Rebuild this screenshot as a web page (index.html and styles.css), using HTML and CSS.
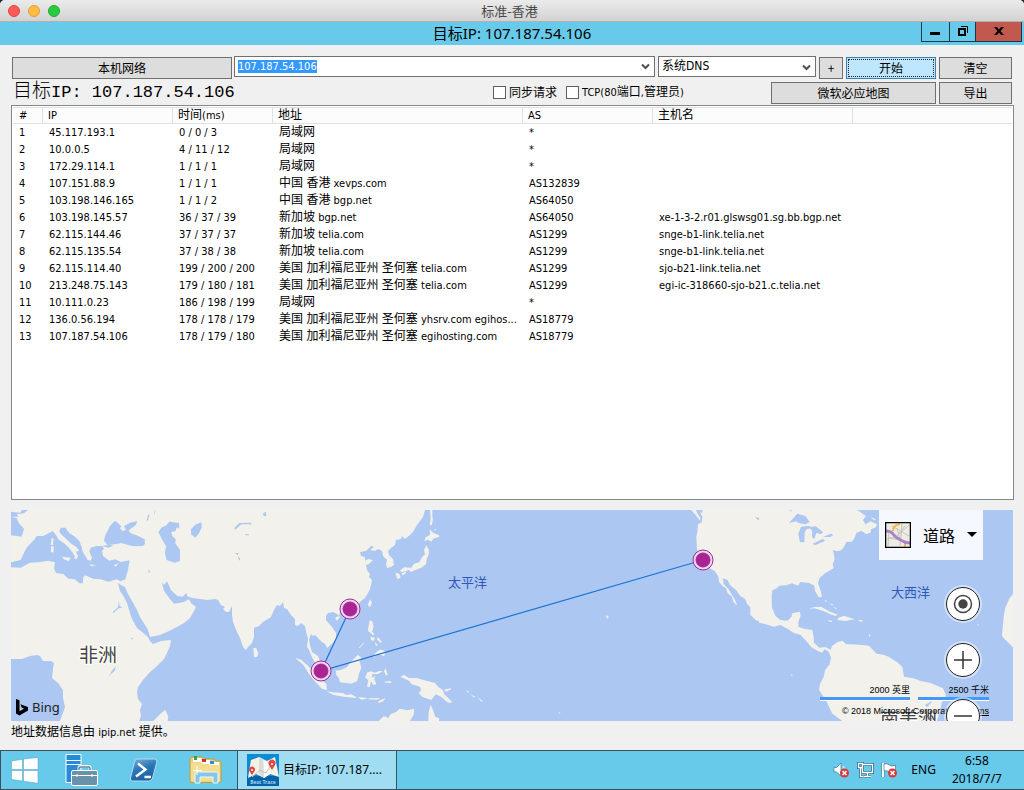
FILE: index.html
```html
<!DOCTYPE html>
<html lang="zh-CN">
<head>
<meta charset="utf-8">
<title>标准-香港</title>
<link rel="stylesheet" href="styles.css">
</head>
<body>
<div class="screen">
  <header class="mac-bar">
    <span class="light red"></span><span class="light amber"></span><span class="light green"></span>
    <span class="mac-title">标准-香港</span>
  </header>

  <div class="win-bar">
    <h1 class="win-title">目标IP: 107.187.54.106</h1>
    <div class="win-controls">
      <button class="wc" aria-label="最小化"><svg width="27" height="19" viewBox="0 0 27 19"><path d="M8 10h10v3H8z"/></svg></button>
      <button class="wc" aria-label="还原"><svg width="25" height="19" viewBox="0 0 25 19"><path d="M9 7h6v6H9z" fill="none" stroke="#000" stroke-width="2"/><path d="M11 4.500h6.500V11" fill="none" stroke="#000"/></svg></button>
      <button class="wc close" aria-label="关闭"><svg width="45" height="19" viewBox="0 0 45 19"><path d="M18 5h3l2 2.500L25 5h3l-3.500 4L28 13h-3l-2-2.500L21 13h-3l3.500-4z"/></svg></button>
    </div>
  </div>

  <main class="app">
    <div class="toolbar">
      <button class="btn w-local">本机网络</button>
      <div class="combo">
        <input class="combo-input" aria-label="目标地址" value="107.187.54.106">
        <button class="combo-arrow" aria-label="展开"><svg width="9" height="7" viewBox="0 0 9 7"><path d="M1 1.500l3.500 3.500L8 1.500" fill="none" stroke="#505050" stroke-width="2"/></svg></button>
      </div>
      <div class="dns">
        <select class="dns-select" aria-label="DNS"><option>系统DNS</option></select>
        <svg class="dns-arrow" width="9" height="7" viewBox="0 0 9 7"><path d="M1 1.500l3.500 3.500L8 1.500" fill="none" stroke="#505050" stroke-width="2"/></svg>
      </div>
      <button class="btn w-plus">+</button>
      <button class="btn primary w-start">开始</button>
      <button class="btn w-clear">清空</button>
    </div>
    <div class="subbar">
      <h2 class="target"><span class="target-zh">目标</span>IP: 107.187.54.106</h2>
      <label class="check"><input type="checkbox"><span class="zh">同步请求</span></label>
      <label class="check"><input type="checkbox"><span>TCP(80<span class="zh">端口</span>,<span class="zh">管理员</span>)</span></label>
      <span class="grow"></span>
      <button class="btn w-map">微软必应地图</button>
      <button class="btn w-clear">导出</button>
    </div>

    <div class="list">
      <table class="hops">
        <colgroup><col class="c1"><col class="c2"><col class="c3"><col class="c4"><col class="c5"><col class="c6"><col></colgroup>
        <thead><tr><th>#</th><th>IP</th><th><span class="zh">时间</span>(ms)</th><th><span class="zh">地址</span></th><th>AS</th><th><span class="zh">主机名</span></th><th></th></tr></thead>
        <tbody>
          <tr><td>1</td><td>45.117.193.1</td><td>0 / 0 / 3</td><td><span class="zh">局域网</span></td><td>*</td><td></td><td></td></tr>
          <tr><td>2</td><td>10.0.0.5</td><td>4 / 11 / 12</td><td><span class="zh">局域网</span></td><td>*</td><td></td><td></td></tr>
          <tr><td>3</td><td>172.29.114.1</td><td>1 / 1 / 1</td><td><span class="zh">局域网</span></td><td>*</td><td></td><td></td></tr>
          <tr><td>4</td><td>107.151.88.9</td><td>1 / 1 / 1</td><td><span class="zh">中国 香港</span> xevps.com</td><td>AS132839</td><td></td><td></td></tr>
          <tr><td>5</td><td>103.198.146.165</td><td>1 / 1 / 2</td><td><span class="zh">中国 香港</span> bgp.net</td><td>AS64050</td><td></td><td></td></tr>
          <tr><td>6</td><td>103.198.145.57</td><td>36 / 37 / 39</td><td><span class="zh">新加坡</span> bgp.net</td><td>AS64050</td><td>xe-1-3-2.r01.glswsg01.sg.bb.bgp.net</td><td></td></tr>
          <tr><td>7</td><td>62.115.144.46</td><td>37 / 37 / 37</td><td><span class="zh">新加坡</span> telia.com</td><td>AS1299</td><td>snge-b1-link.telia.net</td><td></td></tr>
          <tr><td>8</td><td>62.115.135.54</td><td>37 / 38 / 38</td><td><span class="zh">新加坡</span> telia.com</td><td>AS1299</td><td>snge-b1-link.telia.net</td><td></td></tr>
          <tr><td>9</td><td>62.115.114.40</td><td>199 / 200 / 200</td><td><span class="zh">美国 加利福尼亚州 圣何塞</span> telia.com</td><td>AS1299</td><td>sjo-b21-link.telia.net</td><td></td></tr>
          <tr><td>10</td><td>213.248.75.143</td><td>179 / 180 / 181</td><td><span class="zh">美国 加利福尼亚州 圣何塞</span> telia.com</td><td>AS1299</td><td>egi-ic-318660-sjo-b21.c.telia.net</td><td></td></tr>
          <tr><td>11</td><td>10.111.0.23</td><td>186 / 198 / 199</td><td><span class="zh">局域网</span></td><td>*</td><td></td><td></td></tr>
          <tr><td>12</td><td>136.0.56.194</td><td>178 / 178 / 179</td><td><span class="zh">美国 加利福尼亚州 圣何塞</span> yhsrv.com egihos...</td><td>AS18779</td><td></td><td></td></tr>
          <tr><td>13</td><td>107.187.54.106</td><td>178 / 179 / 180</td><td><span class="zh">美国 加利福尼亚州 圣何塞</span> egihosting.com</td><td>AS18779</td><td></td><td></td></tr>
        </tbody>
      </table>
    </div>

    <section class="map" aria-label="路由地图">
      <svg class="world" viewBox="11 510 1002 211" preserveAspectRatio="xMidYMid slice">
        <rect x="11" y="510" width="1002" height="211" fill="#abc7f2"/>
        <!-- Eurasia and Africa -->
        <path fill="#f2f1eb" d="M11 510H425L423 517 417 525 413 532 410 535 405 539 402 536 401 539 396 540 395 545 391 548 388 551 389 555 393 559 394 565 391 567 387 568 386 564 387 560 383 556 382 551 378 549 375 551 370 550 374 547 371 546 366 551 360 552 361 556 365 557 365 561 368 559 373 560 369 564 366 565 367 570 370 574 369 577 372 580 371 585 370 589 368 593 365 598 361 601 357 605 351 609 345 611 340 612 339 616 337 614 333 612 328 613 326 616 326 620 332 627 336 633 336 638 333 643 327 648 325 644 322 642 318 638 315 635 313 636 311 634 309 640 310 645 312 652 318 656 320 661 322 669 319 667 314 661 311 655 309 650 307 647 308 638 306 632 305 626 301 623 298 626 295 625 295 619 291 615 287 609 284 608 283 602 280 606 277 605 274 610 271 617 263 622 259 626 254 628 254 637 252 643 249 646 246 650 243 647 240 638 237 632 233 622 232 615 232 606 229 612 226 612 223 609 225 607 221 605 218 600 215 599 207 600 200 599 192 598 187 596 187 593 184 597 189 599 191 603 196 607 194 611 190 618 184 623 177 627 167 632 160 635 150 637 148 630 145 625 140 617 137 610 132 601 127 592 125 587 121 585 118 583 120 591 124 597 127 603 130 613 132 619 137 628 142 632 148 637 150 641 153 644 161 641 171 640 170 646 167 653 164 659 157 666 149 673 143 680 138 687 137 692 138 699 142 704 140 710 141 716 139 721H60L65 707 63 698 63 690 58 683 52 678 53 668 54 663 51 661 43 661 40 656 37 655 30 656 22 659 11 659Z"/>
        <!-- Inland seas and islands of the western half, drawn on a triple grid -->
        <g transform="translate(0 500) scale(.3333)">
          <g fill="#abc7f2">
            <path d="M33 187L62 180 75 152 82 140 104 118 110 108 130 108 158 93 168 105 175 118 195 132 210 148 218 158 225 170 222 175 230 178 234 168 228 155 237 152 230 142 212 130 200 118 185 104 178 95 182 83 196 83 208 100 222 108 238 123 245 140 248 155 263 180 272 182 276 172 268 155 272 143 290 138 307 138 312 146 306 152 309 168 328 182 345 178 362 186 389 181 384 210 376 238 362 244 350 238 325 245 302 238 280 236 255 226 250 232 248 250 238 250 225 238 205 236 190 222 168 219 162 205 165 187 145 182 115 187 90 188 62 203 33 202Z"/>
            <path d="M345 62L330 78 315 108 312 122 322 135 345 133 364 129 385 135 400 139 428 138 435 132 434 118 410 106 392 100 386 91 407 76 412 63 390 68 372 79 378 89 368 93 360 85 364 78Z"/>
            <path d="M306 138L328 134 340 137 325 143Z"/>
            <path d="M508 65L537 69 538 86 530 82 527 93 514 96 517 108 527 118 526 130 540 150 540 183 524 188 500 180 495 160 498 138 486 118 475 96 486 81 498 77Z"/>
            <path d="M573 88L586 74 604 67 605 82 598 98 586 113 573 103Z"/>
            <path d="M703 84L718 69 754 68 752 73 724 73 706 89Z"/>
            <path d="M33 50L50 54 57 70 72 87 65 110 33 106Z"/>
            <path d="M33 35L60 38 66 30H84L72 40 50 43 55 50H33Z"/>
            <path d="M485 247L492 255 501 244 513 270 531 287 548 290 557 281 562 290 570 296 549 307 523 311 510 298 492 272Z"/>
            <path d="M444 207l7 8-4 4zM338 336l16-14 2-18 3 14 8 5-11 2-16 14zM326 530l10-18 12-14-4 14-13 12zM392 416l5-3 3 6zM440 62l4-16 5-3-5 18zM463 36l4-5-5 15zM735 103h12v3h-12z"/>
          </g>
          <g fill="#f2f1eb">
            <path d="M155 114l6 2-2 20-7-2zM154 137l8 3-2 18-8-2zM187 170l25 3-6 11-17-8zM269 193l20 3-16 3zM341 196l15-6-8 10zM760 445l8-2 7 16-3 11-10 2zM460 663L480 643 496 629 505 650 503 663Z"/>
          </g>
          <g fill="#b9b9b0"><path d="M705 158l10 2-1 5zM713 168l7 8-2 6z"/></g>
        </g>
        <g transform="translate(250 500) scale(.3333)">
          <g fill="#f2f1eb">
            <path d="M540 30h7v15l2 15-4 16-6-2 3-18z"/>
            <path d="M539 87L549 98 567 105 568 110 550 116 544 125 534 119 523 124 527 112 540 105z"/>
            <path d="M529 136L537 150 536 165 530 178 528 193 514 203 497 210 483 216 477 210 456 217 449 212 462 202 484 203 492 191 508 187 516 172 525 163 522 150z"/>
            <path d="M436 218l12 3 4 12-10 5zM455 220l14-6-3 8-10 4z"/>
            <path d="M361 298l5 10-6 14-7-8zM359 361l8 3 4 16-5 15 8 7-5 3-15-12 1-10zM256 351l14-2-4 9-8 4zM388 449l10 1 8 6-3 12-14-4-10 2-9 7 4-12z"/>
            <path d="M362 410l13 3-4 10-8-2zM374 425l9 10-5 4zM384 411l12 14-5 3-10-10zM366 398l6 5-5 3zM326 444l16-18-2 6-12 13z"/>
            <path d="M257 512L273 510 291 501 303 485 324 464 334 474 329 484 334 504 328 518 322 543 304 551 270 547 267 535 259 525z"/>
            <path d="M345 533l7-16 12-3 10 4 16-6 8 2-14 8-18 1 1 10 10-5-4 10 6 14-8 4-8-12-4 18-8-2 4-20z"/>
            <path d="M136 474L154 479 175 499 196 521 215 540 229 552 231 570 216 567 191 540 175 519 160 495z"/>
            <path d="M229 573L250 577 280 579 288 585 303 583 318 590 318 594 281 590 250 585zM324 591l20 2 10 2-20 4zM356 595l35-1-10 5-26-1zM385 603l22-9-7 10-14 6zM402 513l5-8 6 18-5 5zM402 545l20-2 3 6-17-1z"/>
            <path d="M451 530L463 525 477 534 499 534 529 542 555 549 566 562 578 569 583 583 608 607 594 608 573 590 557 583 544 600 517 591 506 579 514 570 509 560 484 552 478 543z"/>
            <path d="M386 663L402 648 415 654 422 642 438 636 449 626 471 631 493 626 491 645 480 663zM535 663L536 635 542 615 549 629 556 651 568 654 567 663z"/>
            <path d="M582 569l18-4 5 3-18 7zM648 570l10 6-4 2zM660 582l16 8-3 3zM683 592l16 12-5 1zM550 92l8-6 1 4zM585 90l10-8zM603 78l8-4zM300 432l3 3zM118 408l2 8z"/>
          </g>
          <path fill="#abc7f2" d="M39 40l10-5-2 6 3 8-9-1zM0 68l5 2-5 6z"/>
        </g>
        <!-- The Americas -->
        <g transform="translate(500 500) scale(.3333)">
          <path fill="#f2f1eb" d="M573 30L585 43 598 60 605 66 594 73 592 96 589 110 591 150 604 172 612 193 630 205 645 214 655 230 657 245 668 259 677 263 683 280 695 289 700 306 712 317 705 299 694 281 685 266 671 252 669 235 683 240 690 255 710 272 720 287 736 298 741 311 751 322 751 345 768 361 797 370V30Z"/>
          <path fill="#abc7f2" d="M588 30l20 1-2 8-6-3 7 14-2 18-5-1 1-14-8-12zM765 51l18 4v7l-12-4z"/>
          <path fill="#f2f1eb" d="M318 345l9 6-6 6zM285 326l3 2zM300 334l4 2zM175 636l7 2-4 3zM108 660l5 2z"/>
        </g>
        <g transform="translate(764 500) scale(.3333)">
          <path fill="#f2f1eb" d="M-15 30H280L306 48 297 60 304 73 320 64 339 73 336 82 321 88 320 97 307 103 298 96 291 93 277 99 272 113 264 125 247 126 238 144 229 152 219 154 206 150 209 158 212 178 206 193 209 205 184 219 166 235 162 250 170 272 174 291 164 292 153 272 151 257 136 249 109 246 102 257 84 250 67 256 46 257 38 265 25 271 23 290 24 324 34 347 49 360 70 362 82 351 85 340 108 335 110 347 103 366 103 380 120 386 145 390 149 411 150 428 166 443 184 441 200 449 204 438 221 426 235 422 247 433 263 433 297 435 315 437 338 461 359 464 374 470 400 487 415 501 420 530 449 535 470 543 500 549 537 565 546 586 533 610 527 637 519 663H235L205 641 187 604 165 569 168 552 180 529 183 511 197 493 201 473 194 455 182 448 174 458 162 453 142 442 126 422 109 404 91 400 70 386 49 375 30 380 10 374-15 368Z"/>
          <path fill="#f2f1eb" d="M134 327L151 321 173 321 198 335 222 344 213 348 199 343 180 334 152 325zM223 353L240 347 258 353 272 358 259 360 244 363 220 360zM189 361l16 1-4 5zM284 360l13 1-2 4-11-1zM183 300l6 4-5 2zM198 309l10 6-4 2zM206 320l13 5-3 2z"/>
          <path fill="#f2f1eb" d="M750 279L737 294 724 323 719 350 714 407 722 418 735 430 750 446z"/>
          <path fill="#f2f1eb" d="M318 51l18 7-6 3zM352 62l18 4-8 5zM703 268l6 2zM735 265l6 3zM640 372l5 3-3 4zM80 523l8 3-6 1zM316 402l4 5-5 4zM700 386l4-2z"/>
          <g fill="#abc7f2">
            <path d="M75 69L100 41 124 48 137 66 123 73 103 69 98 64zM111 80L134 78 145 82 126 89 122 98 121 126 108 127 103 102zM136 82L155 79 172 92 178 98 168 102 157 98 151 118 144 111 145 94zM145 132L176 117 184 122 154 135zM177 111L201 101 208 105 199 111zM76 27l10 8-8-2z"/>
            <path d="M482 616l23-14-3 5-12 14z"/>
          </g>
        </g>
        <g class="map-labels">
          <text x="448" y="587" class="ocean">太平洋</text>
          <text x="891" y="597" class="ocean">大西洋</text>
          <text x="79" y="662" class="land">非洲</text>
          <text x="880" y="726" class="land">南美洲</text>
        </g>
        <path d="M350 609L321 671 703 560" fill="none" stroke="#1b74d4" stroke-width="1.200"/>
        <g class="pins">
          <g><circle cx="350" cy="609" r="10"/><circle class="dot" cx="350" cy="609" r="7"/></g>
          <g><circle cx="321" cy="671" r="10"/><circle class="dot" cx="321" cy="671" r="7"/></g>
          <g><circle cx="703" cy="560" r="10"/><circle class="dot" cx="703" cy="560" r="7"/></g>
        </g>
      </svg>
      <a class="bing" href="#"><svg width="12" height="17" viewBox="0 0 12 17"><path d="M0 0l3.500 1.200v11L8 9.700 5.700 8.500 4.400 5.200 12 8v3.500L3.500 16.500 0 14.500z"/></svg>Bing</a>
      <button class="map-type">
        <svg width="26" height="26" viewBox="0 0 26 26"><path fill="#ecebe5" d="M0 0h26v26H0z"/><path d="M2 17l10-3 12-11M7 4l17 10M17 2l-2 22M4 9l-1 15M12 6l3 12-12-2M20 4l-8 10" fill="none" stroke="#c9c5b6"/><path d="M8 9q0-6 7-7M20 21v5" fill="none" stroke="#f5b84b" stroke-width="2"/><path d="M1 9q5 0 7 3t6 5q6 4 11 4" fill="none" stroke="#ab83c9" stroke-width="3"/><path d="M.5.500h25v25H.5z" fill="none" stroke="#000" stroke-width="1.500"/></svg>
        <span>道路</span>
        <svg width="10" height="6" viewBox="0 0 10 6"><path d="M0 0h10L5 5z"/></svg>
      </button>
      <div class="credits">
        <div class="scales"><span class="scale miles">2000 英里</span><span class="scale km">2500 千米</span></div>
        <div class="copy">© 2018 Microsoft Corporation&nbsp; <a href="#">Terms</a></div>
      </div>
      <div class="map-buttons">
        <button aria-label="定位"><svg width="32" height="32" viewBox="0 0 32 32"><circle cx="16" cy="16" r="8.500" fill="none" stroke="#444" stroke-width="1.500"/><circle cx="16" cy="16" r="4.700" fill="#444"/></svg></button>
        <button aria-label="放大"><svg width="32" height="32" viewBox="0 0 32 32"><path d="M16 7v18M7 16h18" stroke="#333" stroke-width="1.500"/></svg></button>
        <button aria-label="缩小"><svg width="32" height="32" viewBox="0 0 32 32"><path d="M7 16h18" stroke="#333" stroke-width="1.500"/></svg></button>
      </div>
    </section>
    <p class="source"><span class="zh">地址数据信息由</span> ipip.net <span class="zh">提供。</span></p>
  </main>

  <footer class="taskbar">
    <button class="tb" aria-label="开始"><svg width="28" height="27" viewBox="0 0 28 27"><g fill="#fff" stroke="#4b9fbd" stroke-width=".5"><path d="M.5 4L11.500 2.300V12.500H.500zM12.500 2L27 .5V12.500H12.500zM.5 13.500H11.500V24L.5 22.500zM12.500 13.500H27V26.300L12.500 24.200z"/></g></svg></button>
    <button class="tb" aria-label="服务器管理器"><svg width="34" height="32" viewBox="0 0 34 32"><path d="M1 .5h15v28H1z" fill="#258bd8" stroke="#fff"/><path d="M1 6.500h15M1 10.500h15" stroke="#fff"/><path d="M14 16.500v-2.500q0-1.500 1.500-1.500h8q1.500 0 1.500 1.500v2.500" fill="none" stroke="#fff" stroke-width="3"/><path d="M14 16.500v-2q0-1.500 1.500-1.500h8q1.500 0 1.500 1.500v2" fill="none" stroke="#60849e" stroke-width="1.500"/><rect x="6.500" y="16.500" width="26" height="15" rx="1.500" fill="#6a90aa" stroke="#fff"/><path d="M7 21.500h25M12 20v3M27 20v3" stroke="#fff"/></svg></button>
    <button class="tb" aria-label="PowerShell"><svg width="30" height="26" viewBox="0 0 30 26"><defs><linearGradient id="ps" x1="0" y1="0" x2=".4" y2="1"><stop offset="0" stop-color="#7fb4de"/><stop offset=".5" stop-color="#2c78b8"/><stop offset="1" stop-color="#1e62a4"/></linearGradient></defs><path d="M8 2h17.500q3 0 2.300 3l-4.300 16q-.7 3-4 3H3.500q-2.700 0-2-3l4-16q.7-3 2.500-3z" fill="url(#ps)" stroke="#b5d9ef"/><path d="M9 6.500l7.500 6-9.500 7M15.500 20h6.500" fill="none" stroke="#fff" stroke-width="2.400"/></svg></button>
    <button class="tb" aria-label="文件资源管理器"><svg width="34" height="30" viewBox="0 0 34 30"><path d="M1 4q0-2 2-2h10l3 2h8l3 2h4q1 0 1 1v19q0 1.500-2 1.500H3q-2 0-2-1.500z" fill="#ecd27b" stroke="#c29c3c"/><path d="M4 3h8v4H4zM12 5h9v4h-9zM20 7h10v4H20z" fill="#fff"/><path d="M5 1h3v4H5z" fill="#3aa24a"/><path d="M13 4h4v3h-4z" fill="#c83b2e"/><path d="M21 6h4v3h-4z" fill="#348bd0"/><path d="M2 8h12l2 2h15v16H2z" fill="#f3dd8e"/><path d="M6 28v-9q0-2 2-2h19q2 0 2 2v9h-5v-6H11v6z" fill="#86c5e8" stroke="#eaf8ff"/><path d="M8 11v9M4 15.500h9" stroke="#fff"/></svg></button>
    <button class="task">
      <svg width="32" height="32" viewBox="0 0 32 32"><path fill="#0b8bd2" d="M0 0h32v32H0z"/><path fill="#0564a8" d="M0 22h32v10H0z"/><path d="M4 6l8-3 8 4 8-4 4 20-9-3-6 4-8-4-8 4z" fill="#f5f2e5"/><path d="M12 3v17l5 4-1-19z" fill="#d6dce0"/><path d="M20 7l3 13-6 4V8z" fill="#fff"/><path d="M5 23l8-7 6 3 5-8" fill="none" stroke="#dcbf9b"/><path d="M5 21l-2.300-3.500a3 3 0 1 1 4.600 0zM25 16l-3-5a3.500 3.500 0 1 1 6 0z" fill="#df4747"/><circle cx="5" cy="16" r="1" fill="#fff"/><circle cx="25" cy="10" r="1" fill="#fff"/><text x="16" y="30" class="app-name">Best Trace</text></svg>
      <span>目标IP: 107.187....</span>
    </button>
    <span class="grow"></span>
    <div class="tray">
      <svg width="17" height="16" viewBox="0 0 17 16"><path d="M1 5.500h2.500L8 1v13L3.500 10H1z" fill="#fff" stroke="#45738a" stroke-width=".7"/><path d="M10 4q2 2 1 4" fill="none" stroke="#fff"/><circle cx="11.500" cy="11" r="4.500" fill="#d83b3b"/><path d="M9.500 9l4 4m0-4l-4 4" stroke="#fff" stroke-width="1.500"/></svg>
      <svg width="17" height="16" viewBox="0 0 17 16"><path d="M5.500 2.500h10v8h-10zM10.500 11v3M7 14.500h7M3.500 6v8.500h3M1.500 1.500h4v4h-4z" fill="none" stroke="#366e88" stroke-width="3"/><path d="M5.500 2.500h10v8h-10zM10.500 11v3M7 14.500h7M3.500 6v8.500h3M1.500 1.500h4v4h-4z" fill="none" stroke="#fff" stroke-width="1.300"/></svg>
      <svg width="17" height="16" viewBox="0 0 17 16"><path d="M2 1v14" stroke="#45738a" stroke-width="3"/><path d="M2 1v14" stroke="#fff" stroke-width="2"/><path d="M3 2q3-1 5.500 1t6 0v7q-3 2-6 0t-5.500-1z" fill="#fff" stroke="#45738a" stroke-width=".7"/><circle cx="11.500" cy="11" r="4.500" fill="#d83b3b"/><path d="M9.500 9l4 4m0-4l-4 4" stroke="#fff" stroke-width="1.500"/></svg>
    </div>
    <span class="lang">ENG</span>
    <div class="clock"><span>6:58</span><span>2018/7/7</span></div>
  </footer>
</div>
</body>
</html>
```
FILE: styles.css
```css
* { box-sizing: border-box; }
body {
  margin: 0;
  background: #1c2733;
  color: #000;
  font: 11px/17px "DejaVu Sans Condensed", "Noto Sans CJK SC", sans-serif;
}
button, input, select { font: inherit; color: inherit; margin: 0; padding: 0; }
button { border: 0; background: none; }
h1, h2, p { margin: 0; font-weight: normal; }
svg { display: block; flex: none; }
.screen {
  display: flex;
  flex-direction: column;
  min-height: 100vh;
  background: #f0f0f0;
  border-radius: 5px 5px 0 0;
  overflow: hidden;
}
.grow { flex: 1; }
.zh { font-size: 12px; line-height: 12px; }

.mac-bar {
  position: relative;
  display: flex;
  align-items: center;
  gap: 8px;
  height: 22px;
  padding-left: 8px;
  background: linear-gradient(#ebebeb, #d2d2d2);
  border-bottom: 1px solid #b1b1b1;
}
.light { width: 12px; height: 12px; border-radius: 50%; border: 1px solid; }
.red { background: #fc5b57; border-color: #e2443f; }
.amber { background: #fdbc40; border-color: #e0a032; }
.green { background: #29c941; border-color: #1bac2c; }
.mac-title {
  position: absolute;
  inset: 0 5px 0 0;
  text-align: center;
  font: 13px/22px "Noto Sans CJK SC", sans-serif;
  color: #484848;
}

.win-bar {
  position: relative;
  height: 23px;
  background: #67caea;
}
.win-title { text-align: center; font: 15px/22px "Noto Sans", "Noto Sans CJK SC", sans-serif; }
.win-controls {
  position: absolute;
  top: 0;
  right: 2px;
  display: flex;
  border: 1px solid #173848;
  border-top: 0;
}
.wc + .wc { border-left: 1px solid #173848; }
.wc.close { background: #c2594f; }

.app { flex: 1; display: flex; flex-direction: column; padding: 11px 11px 8px 11px; }
.toolbar, .subbar { display: flex; gap: 3px; padding: 0 1px; }
.toolbar { height: 24px; align-items: flex-start; }
.subbar { height: 25px; align-items: center; }
.btn {
  height: 22px;
  border: 1px solid #707070;
  background: #ddd;
  font: 12px/20px "Noto Sans CJK SC", sans-serif;
}
.toolbar .btn { margin-top: 1px; }
.btn.primary { background: #bee6fd; border-color: #3c7fb1; outline: 1px dotted #222; outline-offset: -3px; }
.w-local { width: 220px; }
.w-plus { width: 24px; }
.w-start { width: 90px; }
.w-clear { width: 73px; }
.w-map { width: 165px; }
.combo, .dns { display: flex; height: 21px; background: #fff; border: 1px solid #707070; }
.combo { flex: 1; margin-left: -1px; }
.combo-input {
  flex: 1;
  min-width: 0;
  height: 13px;
  margin: 3px;
  border: 0;
  outline: 0;
  color: #fff;
  background: linear-gradient(#3399ff, #3399ff) no-repeat 0 0 / 79px 100%;
}
.combo-arrow { padding: 0 4px; }
.dns { position: relative; width: 158px; }
.dns-select { flex: 1; appearance: none; border: 0; outline: 0; background: none; padding: 0 3px; font-size: 12px; }
.dns-arrow { position: absolute; right: 4px; top: 7px; pointer-events: none; }
.target {
  width: 478px;
  padding-left: 1px;
  font: 17px/24px "Liberation Mono", "Noto Sans CJK SC", monospace;
  white-space: pre;
}
.target-zh { font-size: 19px; font-weight: 300; }
.check { display: flex; align-items: center; gap: 3px; padding-right: 6px; }
.check input { appearance: none; width: 13px; height: 13px; background: #fff; border: 1px solid #606060; }

.list { flex: 1; min-height: 394px; margin-right: -1px; background: #fff; border: 1px solid #828790; padding: 1px; }
.hops { width: 100%; table-layout: fixed; border-collapse: separate; border-spacing: 0; }
.hops th, .hops td {
  height: 17px;
  padding: 0 0 0 5px;
  text-align: left;
  font-weight: normal;
  white-space: nowrap;
  line-height: 17px;
}
.hops td { padding-left: 6px; }
.hops tr > :first-child { padding-left: 6px; }
.hops th { height: 16px; line-height: 15px; background: #fcfcfc; border: 1px solid #e0e0e0; border-left-width: 0; border-right-width: 1px; }
.hops th:last-child { border-right: 0; }
.c1 { width: 30px; }
.c2 { width: 130px; }
.c3 { width: 100px; }
.c4 { width: 250px; }
.c5 { width: 130px; }
.c6 { width: 200px; }

.map { position: relative; height: 211px; margin-top: 10px; overflow: hidden; }
.world { width: 100%; height: 100%; }
.ocean { font: 13px "Noto Sans CJK SC", sans-serif; fill: #3157b7; }
.land { font: 19px "Noto Sans CJK SC", sans-serif; fill: #444; stroke: #fff; stroke-width: 2px; paint-order: stroke; }
.pins circle { fill: #e5dcf2; stroke: #aa2593; }
.pins .dot { fill: #aa2593; }
.bing {
  position: absolute;
  left: 5px;
  bottom: 5px;
  display: flex;
  align-items: center;
  gap: 4px;
  color: #222;
  text-decoration: none;
  font: 13px/17px "Noto Sans", sans-serif;
}
.map-type {
  position: absolute;
  right: 30px;
  top: 0;
  height: 50px;
  display: flex;
  align-items: center;
  gap: 12px;
  padding: 0 6px;
  background: rgba(255, 255, 255, .88);
  font: 16px/24px "Noto Sans CJK SC", sans-serif;
}
.map-buttons { position: absolute; right: 33px; top: 77px; display: grid; gap: 22px; }
.map-buttons button {
  width: 34px;
  height: 34px;
  border-radius: 50%;
  background: #fff;
  border: 1px solid #222;
  display: grid;
  place-items: center;
  box-shadow: 0 0 0 2px rgba(255, 255, 255, .45);
}
.credits { position: absolute; right: 24px; bottom: 3px; font: 9px/14px "Liberation Sans", "Noto Sans CJK SC", sans-serif; }
.scales { display: flex; gap: 8px; margin-bottom: 4px; }
.scale { text-align: right; border-bottom: 3px solid #4499f8; box-shadow: 0 1px #fff; line-height: 13px; }
.miles { width: 90px; }
.km { width: 71px; }
.copy { text-align: right; }
.copy a { color: inherit; }
.source { height: 18px; margin-top: 3px; line-height: 18px; }

.taskbar {
  height: 40px;
  display: flex;
  align-items: center;
  padding: 0 20px 0 10px;
  background: #67caea;
  border: 1px solid #3f4f56;
  border-width: 1px 0 1px 1px;
  font: 12px/18px "Noto Sans", "Noto Sans CJK SC", sans-serif;
}
.tb { width: 28px; display: flex; justify-content: center; margin-right: 34px; }
.tb:nth-child(2) { width: 34px; margin-left: -8px; margin-right: 30px; }
.tb:nth-child(3) { width: 30px; margin-right: 30px; }
.tb:nth-child(4) { width: 34px; margin-right: 14px; }
.task {
  width: 160px;
  height: 38px;
  display: flex;
  align-items: center;
  gap: 4px;
  padding-left: 9px;
  background: #a0ddf3;
  border: 1px solid #2c5a6c;
  border-width: 0 1px;
}
.app-name { font: bold 5px "Noto Sans", sans-serif; fill: #a9d9f5; text-anchor: middle; }
.tray { display: flex; gap: 7px; margin-right: 13px; }
.lang { margin-right: 16px; }
.clock { display: grid; text-align: center; margin-right: 2px; }
```
